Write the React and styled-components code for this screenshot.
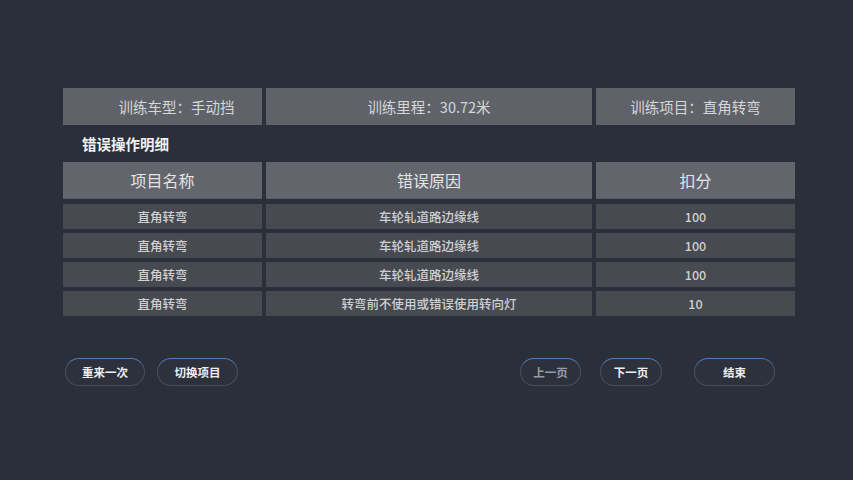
import styled, { createGlobalStyle } from "styled-components";

const GlobalStyle = createGlobalStyle`
  html, body {
    margin: 0;
    padding: 0;
    background: #2a2f3a;
  }
  body {
    font-family: "Noto Sans CJK SC", "Noto Sans", sans-serif;
  }
`;

const INFO = [
  { id: "car", text: "训练车型：手动挡", indent: 28 },
  { id: "km", text: "训练里程：30.72米", indent: 0 },
  { id: "item", text: "训练项目：直角转弯", indent: 0 },
];

const HEADERS = ["项目名称", "错误原因", "扣分"];

const ROWS = [
  { id: 1, name: "直角转弯", reason: "车轮轧道路边缘线", score: 100 },
  { id: 2, name: "直角转弯", reason: "车轮轧道路边缘线", score: 100 },
  { id: 3, name: "直角转弯", reason: "车轮轧道路边缘线", score: 100 },
  { id: 4, name: "直角转弯", reason: "转弯前不使用或错误使用转向灯", score: 10 },
];

const Page = styled.div`
  width: 853px;
  height: 480px;
  box-sizing: border-box;
  padding: 88px 58px 0 63px;
  background: #2a2f3a;
  overflow: hidden;
`;

const Grid = styled.div`
  display: grid;
  grid-template-columns: 199px 326px 199px;
  column-gap: 4px;
`;

const InfoCell = styled.div`
  height: 37px;
  display: flex;
  align-items: center;
  justify-content: center;
  padding-left: ${(p) => p.$indent}px;
  background: #5f6268;
  color: #d6d7d9;
  font-size: 14.5px;
`;

const Title = styled.div`
  height: 37px;
  display: flex;
  align-items: center;
  padding-left: 19px;
  color: #f2f2f2;
  font-size: 14.5px;
  font-weight: 700;
`;

const HeadCell = styled.div`
  height: 37px;
  display: flex;
  align-items: center;
  justify-content: center;
  background: #62656c;
  border-bottom: 1px solid #585b61;
  box-sizing: border-box;
  color: #e3e4e6;
  font-size: 16px;
`;

const Body = styled.div`
  display: flex;
  flex-direction: column;
  gap: 4px;
  margin-top: 5px;
`;

const Cell = styled.div`
  height: 25px;
  display: flex;
  align-items: center;
  justify-content: center;
  background: #474a51;
  color: #cfd0d2;
  font-size: 12.5px;
  font-weight: 500;
`;

const Actions = styled.div`
  display: flex;
  align-items: center;
  margin-top: 42px;
  padding: 0 20px 0 2px;
`;

const Group = styled.div`
  display: flex;
  gap: ${(p) => p.$gap}px;
  margin-left: ${(p) => (p.$right ? "auto" : "0")};
`;

const Button = styled.button`
  width: ${(p) => p.$w}px;
  height: 28px;
  margin-left: ${(p) => p.$ml || 0}px;
  padding: 0;
  border: 1px solid transparent;
  border-radius: 14px;
  background:
    linear-gradient(#2c313c, #2c313c) padding-box,
    linear-gradient(to bottom, #4d7fc6 0%, #46536a 30%, #474c57 100%) border-box;
  color: ${(p) => (p.$disabled ? "#9a9da3" : "#eeeeee")};
  font-family: "Noto Sans CJK SC", "Noto Sans", sans-serif;
  font-size: 11.5px;
  font-weight: 700;
  cursor: pointer;
`;

export default function App() {
  return (
    <>
      <GlobalStyle />
      <Page>
        <Grid>
          {INFO.map(({ id, text, indent }) => (
            <InfoCell key={id} $indent={indent}>
              {text}
            </InfoCell>
          ))}
        </Grid>
        <Title>错误操作明细</Title>
        <Grid>
          {HEADERS.map((h) => (
            <HeadCell key={h}>{h}</HeadCell>
          ))}
        </Grid>
        <Body>
          {ROWS.map(({ id, name, reason, score }) => (
            <Grid key={id}>
              <Cell>{name}</Cell>
              <Cell>{reason}</Cell>
              <Cell>{score}</Cell>
            </Grid>
          ))}
        </Body>
        <Actions>
          <Group $gap={12}>
            <Button $w={80}>重来一次</Button>
            <Button $w={81}>切换项目</Button>
          </Group>
          <Group $gap={19} $right>
            <Button $w={61} $disabled>上一页</Button>
            <Button $w={62}>下一页</Button>
            <Button $w={81} $ml={13}>结束</Button>
          </Group>
        </Actions>
      </Page>
    </>
  );
}
